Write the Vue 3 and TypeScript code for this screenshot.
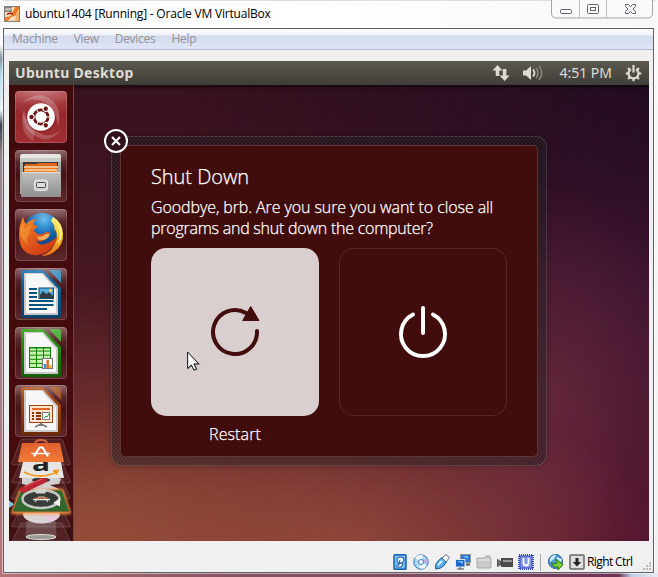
<script setup lang="ts">
const menus: string[] = ['Machine', 'View', 'Devices', 'Help']
const dots: number[] = [60, 180, 300]
const cells: number[] = [24.1, 28.2, 32.3, 36.4]
const gearTeeth: number[] = [45, 90, 135, 180, 225, 270, 315]
const docs = [
  { id: 'writer', main: '#0f6ea8', dark: '#08426a', light: '#3f8fbe' },
  { id: 'calc', main: '#2d9c10', dark: '#146004', light: '#48ab34' },
  { id: 'impress', main: '#b35218', dark: '#6d2b06', light: '#a4552a' },
]
</script>

<template>
  <div class="window">
    <header class="titlebar">
      <svg class="app-icon" width="16" height="16" viewBox="0 0 16 16">
        <rect x=".5" y=".5" width="15" height="15" fill="#f6dcbc" stroke="#8b7b70" />
        <path d="M8 6l3-5h4v2l-4 7-4 1-3 4H1v-4l4-1z" fill="#ef7b24" />
        <path d="M12 8l3-3v10h-4z" fill="#f0b06c" />
        <path d="M1 10l5 0 4-8" fill="none" stroke="#fff0d0" />
        <rect width="8" height="6" fill="#84817d" />
        <path d="M1 4l2-2v3m2-3v3m0-2h3M3 7h5" stroke="#e4e2e0" fill="none" />
        <path d="M3 8.500l3-1.500 3 1" stroke="#ac1e10" stroke-width="1.500" fill="none" />
      </svg>
      <h1>ubuntu1404 [Running] - Oracle VM VirtualBox</h1>
      <div class="controls">
        <svg width="102" height="19" viewBox="0 0 102 19">
          <path d="M.5 0v13q0 5 5 5h91q5 0 5-5V0" fill="#fafafa" stroke="#a5a5a8" />
          <path d="M28.500 0v18M55.500 0v18" stroke="#bdbdc0" />
          <rect x="9.500" y="9.500" width="11" height="4" rx="1" fill="#fff" stroke="#606070" />
          <rect x="36.500" y="4.500" width="11" height="9" rx="1" fill="#fff" stroke="#606070" />
          <rect x="39.500" y="7.500" width="5" height="3" fill="#fff" stroke="#606070" />
          <path d="M74.500 4.500h3l2 2.200 2-2.200h3v2L82 9l2.500 2.500v2h-3l-2-2.200-2 2.200h-3v-2L77 9l-2.500-2.500z" fill="#f4f4f5" stroke="#606070" />
        </svg>
      </div>
    </header>

    <div class="frame">
      <nav class="menubar">
        <span v-for="m in menus" :key="m">{{ m }}</span>
      </nav>

      <main class="guest">
        <div class="panel">
          <span class="panel-title">Ubuntu Desktop</span>
          <div class="indicators">
            <svg class="net" width="18" height="16" viewBox="0 0 18 16">
              <path d="M5.500 0l5 5.500H7.300V11H3.700V5.500H.5zM12.600 16l-5-5.500h3.200V4h3.600v6.500h3.200z" fill="#dfdbd2" />
            </svg>
            <svg class="sound" width="20" height="16" viewBox="0 0 20 16">
              <path d="M0 5.500h3l5-4.500v14l-5-4.500H0z" fill="#dfdbd2" />
              <path d="M10 4.500q3 3.500 0 7" stroke="#dfdbd2" stroke-width="1.800" fill="none" />
              <path d="M13 3q4 5 0 10M16 1q5.500 7 0 14" stroke="#8b887f" stroke-width="1.500" fill="none" />
            </svg>
            <span class="clock">4:51 PM</span>
            <svg width="17" height="17" viewBox="0 0 17 17">
              <g stroke="#dfdbd2" stroke-width="2.200">
                <path v-for="a in gearTeeth" :key="a" d="M8.500.8v3" :transform="`rotate(${a} 8.5 8.5)`" />
                <path d="M8.500 0v7.500" />
                <path d="M5.900 4.200a5 5 0 1 0 5.200 0" fill="none" />
              </g>
            </svg>
          </div>
        </div>

        <div class="desktop">
          <aside class="launcher">
            <div class="tile dash">
              <svg width="52" height="52" viewBox="0 0 52 52">
                <path d="M7 12Q22-1 35 8q13 8 8 28Q41 15 25 9 14 7 7 12z" fill="#fff" opacity=".22" />
                <path d="M47 38Q34 54 20 45 5 36 9 18q4 20 20 26 9 2 18-6z" fill="#fff" opacity=".2" />
                <path d="M18 50Q4 42 8 20q2 12 12 20z" fill="#fff" opacity=".18" />
                <circle cx="26" cy="27" r="14.500" fill="#6a0d12" opacity=".3" />
                <circle cx="26" cy="26" r="13.800" fill="#fff" />
                <circle cx="26" cy="26" r="7" fill="none" stroke="#701513" stroke-width="3" />
                <path d="M26 26L37 26M26 26L20.500 16.500M26 26L20.500 35.500" stroke="#fff" stroke-width="1.100" />
                <g v-for="d in dots" :key="d" :transform="`rotate(${d} 26 26)`">
                  <circle cx="35.500" cy="26" r="3.200" fill="#fff" />
                  <circle cx="35.500" cy="26" r="2.200" fill="#701513" />
                </g>
                <circle cx="26" cy="26" r="5.500" fill="#fff" />
              </svg>
            </div>
            <div class="tile">
              <svg width="52" height="52" viewBox="0 0 52 52">
                <defs>
                  <linearGradient id="cab" x2="0" y2="1"><stop stop-color="#c0c0be" /><stop offset="1" stop-color="#8f8f8d" /></linearGradient>
                </defs>
                <path d="M8 4h36q2 0 2 3v37H5V7q0-3 3-3z" fill="#a9a9a6" />
                <path d="M8 4h36q2 0 2 4H5q0-4 3-4z" fill="#e3e3e0" />
                <path d="M5 8h41v4H5z" fill="#c6c6c3" />
                <rect x="8" y="12" width="35" height="11" fill="#373430" />
                <path d="M10 14h12l1-1h19v9H9z" fill="#d9641f" />
                <path d="M9 16h34v2H9z" fill="#f6c088" />
                <path d="M9 18.500h34v4H9z" fill="#f08b33" />
                <path d="M10 20h32" stroke="#fff2dd" />
                <path d="M7 22h38l1 25H6z" fill="url(#cab)" />
                <path d="M7 22.500h38" stroke="#dededc" />
                <rect x="19.500" y="30" width="13" height="10.500" rx="2" fill="#d2d2d0" stroke="#e8e8e6" />
                <rect x="21.500" y="32.500" width="9" height="5" rx="1" fill="#e0e0de" stroke="#484848" />
              </svg>
            </div>
            <div class="tile">
              <svg width="52" height="52" viewBox="0 0 52 52">
                <defs>
                  <radialGradient id="globe" cx=".55" cy=".2" r=".8"><stop stop-color="#5dbaea" /><stop offset=".45" stop-color="#176ab5" /><stop offset="1" stop-color="#0b2b63" /></radialGradient>
                  <linearGradient id="fox" x1="0" x2=".8" y2="1"><stop stop-color="#f08a24" /><stop offset=".55" stop-color="#e2571b" /><stop offset="1" stop-color="#c93612" /></linearGradient>
                  <linearGradient id="tail" x2="0" y2="1"><stop stop-color="#fff27a" /><stop offset=".5" stop-color="#fbc628" /><stop offset="1" stop-color="#e8681a" /></linearGradient>
                </defs>
                <circle cx="27" cy="23" r="19" fill="url(#globe)" />
                <path d="M38 8q9 5 10 16 1 12-9 19-5 4-13 4 13-5 15-16 2-6-1-11l-1 4q2-8-3-12z" fill="url(#tail)" />
                <path d="M8 8q1 5 3 7 5-5 10-5-3 3-2 6l4 1-5 5q3 0 4 3 6 1 9-2h4q0 5-6 8-4 3-8 0 3 7 12 3 5-2 10-7-3 11-11 16-10 6-20 1Q4 39 4 26q0-10 4-18z" fill="url(#fox)" />
                <path d="M5 22q1-7 5-9-2 4 0 7 4-5 8-4-5 4-3 8-5 5-2 12-7-6-8-14z" fill="#f6a03b" opacity=".55" />
                <path d="M22 27q5 2 9-2h4q-2 6-9 6-3 0-4-4z" fill="#f9b25c" />
                <path d="M43 17q5 9 0 17M41 12q8 8 4 19" stroke="#fff7a5" fill="none" />
              </svg>
            </div>
            <div v-for="doc in docs" :key="doc.id" class="tile" :class="doc.id">
              <svg width="52" height="52" viewBox="0 0 52 52">
                <defs>
                  <linearGradient :id="doc.id" x2="0" y2="1"><stop :stop-color="doc.main" /><stop offset="1" :stop-color="doc.dark" /></linearGradient>
                </defs>
                <path d="M8 2h20l18 18v28q0 2-2 2H8q-2 0-2-2V4q0-2 2-2z" :fill="`url(#${doc.id})`" />
                <path d="M34 2h10q2 0 2 2v11z" :fill="doc.light" />
                <path d="M9 5h19l15 16v26H9z" fill="#c9c9c9" />
                <path d="M11 6h16l14 16v23H11z" fill="#f7f7f7" />
                <g v-if="doc.id === 'writer'">
                  <path d="M14 21h8M14 25h8M14 29h8M14 33h24.500M14 37h24.500M14 41h18" stroke="#0d527d" stroke-width="2" />
                  <rect x="24" y="20" width="14.500" height="10.500" fill="#55aee2" stroke="#104b70" />
                  <path d="M25 30v-3l3-4 3 3 3-2 4 4v2z" fill="#333c3e" />
                  <circle cx="35.500" cy="22.500" r="1.700" fill="#f9ce35" />
                </g>
                <g v-else-if="doc.id === 'calc'">
                  <rect x="14.500" y="20.500" width="21" height="20" fill="#c4f3ac" stroke="#158309" />
                  <path v-for="y in cells" :key="y" :d="`M14 ${y}h22`" stroke="#158309" />
                  <path d="M21.500 20v21M28.500 20v21M14 21h22" stroke="#158309" />
                  <rect x="27.500" y="31.500" width="10" height="10" fill="#fff" stroke="#777" />
                  <path d="M30 41v-4" stroke="#2a91d7" stroke-width="2.500" />
                  <path d="M32.700 41v-8" stroke="#e06a20" stroke-width="2.500" />
                  <path d="M35.500 41v-3" stroke="#eab428" stroke-width="2.500" />
                </g>
                <g v-else>
                  <path d="M26 37v4M26 39l-6 3M26 39l6 3" stroke="#777" stroke-width="1.500" />
                  <rect x="14.500" y="20.500" width="23" height="17" fill="#ffe3cf" stroke="#a34312" />
                  <path d="M17 24h18" stroke="#e16a22" stroke-width="2" />
                  <path d="M17 28h2M17 31h2M17 34h2M21 28h5M21 31h5M21 34h5" stroke="#8e3308" stroke-width="1.800" />
                  <rect x="27.500" y="27.500" width="7" height="7" fill="#fff" stroke="#777" />
                  <path d="M29 33l2-2 1 1 2-3" stroke="#25a335" fill="none" />
                </g>
              </svg>
            </div>
            <svg class="folded" width="64" height="104" viewBox="0 0 64 104">
              <defs>
                <linearGradient id="bag" x2="0" y2="1"><stop stop-color="#e06031" /><stop offset="1" stop-color="#f37a35" /></linearGradient>
                <filter id="glow" x="-20%" y="-20%" width="140%" height="140%"><feGaussianBlur stdDeviation="1.500" /></filter>
              </defs>
              <g fill="#fff" fill-opacity=".08" stroke="#fff" stroke-opacity=".16">
                <path d="M14 2h37q2 0 3 2l7 22q1 2-2 2H5q-3 0-2-2L11 4q1-2 3-2z" />
                <path d="M12 24h41l8 20q1 2-2 2H5q-3 0-2-2z" />
                <path d="M12 42h41l8 18q1 2-2 2H5q-3 0-2-2z" />
                <path d="M12 70h41l8 18q1 2-2 2H5q-3 0-2-2z" />
                <path d="M12 86h41l8 18H3z" />
              </g>
              <path d="M17.500 84h29l1 16h-31z" fill="#c8bdbd" opacity=".25" />
              <ellipse cx="32" cy="100" rx="15" ry="2.500" fill="#9b9b95" stroke="#dedede" />
              <ellipse cx="32.500" cy="77" rx="18.500" ry="9.500" fill="#d9d4d3" />
              <path d="M33 77l17 2q-4 5-11 6z" fill="#e7c9dc" />
              <path d="M13 41l10-3h22l7 4-2 5-9 1 9 4-2 4H16l-2-4 8-3-9-2z" fill="#d1d0ce" />
              <ellipse cx="32" cy="43" rx="9" ry="2.500" fill="#343434" />
              <path d="M11 52h43l8 25H2z" fill="#ff9b4a" filter="url(#glow)" />
              <path d="M12 53h41l8 22H3z" fill="#31682d" stroke="#c16f2c" />
              <ellipse cx="32" cy="62" rx="18.500" ry="9" fill="#393b39" stroke="#c6c9c3" stroke-width="2.500" />
              <path d="M25 52.500h13l-2 4h-9z" fill="#d5d4d1" />
              <path d="M26 65l4-5h5l4 5" stroke="#d8d8d8" stroke-width="1.200" fill="none" />
              <path d="M24 62.500h17" stroke="#ececec" stroke-width="1.500" />
              <path d="M26 61h13" stroke="#eb6224" />
              <path d="M44 66l7-5v8.500z" fill="#f0f0ec" />
              <path d="M14 53L35 43" stroke="#bb2634" stroke-width="6" stroke-linecap="round" />
              <path d="M15 50L33 42" stroke="#e65c65" stroke-width="1" />
              <path d="M14 25h38l3 16H10z" fill="#e7e6e4" />
              <text x="23" y="34" font-size="22" font-weight="700" fill="#242424" textLength="18" lengthAdjust="spacingAndGlyphs">a</text>
              <path d="M15 35q16 8 33 0M44 34l5-.5-2 4" fill="none" stroke="#f7981d" stroke-width="1.800" />
              <path d="M13 6h38l4 19H9z" fill="url(#bag)" />
              <path d="M26 7q0-4 6-4t6 4" fill="none" stroke="#d1613a" stroke-width="2" />
              <path d="M25 19.500l5.500-9h3l5.500 9" fill="none" stroke="#fff" stroke-width="2.200" />
              <path d="M22.500 16.500h18.500" stroke="#fff" stroke-width="1.500" />
              <path d="M0 63.500L5 67.300 0 71z" fill="#7dcae9" />
            </svg>
          </aside>

          <section class="dialog">
            <button class="close" aria-label="Close">
              <svg width="24" height="24" viewBox="0 0 24 24">
                <circle cx="12" cy="12" r="11" fill="#30121d" stroke="#fff" stroke-width="2" />
                <path d="M8 8l8 8M16 8l-8 8" stroke="#fff" stroke-width="2" />
              </svg>
            </button>
            <div class="dialog-body">
              <h2>Shut Down</h2>
              <p><span class="line-a">Goodbye, brb. Are you sure you want to close all</span><br><span class="line-b">programs and shut down the computer?</span></p>
              <div class="actions">
                <div class="action">
                  <div class="choice selected">
                    <svg width="168" height="168" viewBox="0 0 168 168">
                      <path d="M106 83A22 22 0 1 1 95 65" fill="none" stroke="#430c0d" stroke-width="4" stroke-linecap="round" />
                      <path d="M99.700 58.500L108 72.500H91.700z" fill="#430c0d" stroke="#430c0d" stroke-width="1" stroke-linejoin="round" />
                    </svg>
                  </div>
                  <span class="restart-label">Restart</span>
                </div>
                <div class="action">
                  <div class="choice">
                    <svg width="168" height="168" viewBox="0 0 168 168">
                      <path d="M74 66.500a22 22 0 1 0 20 0M84 60v25" fill="none" stroke="#fff" stroke-width="4" stroke-linecap="round" />
                    </svg>
                  </div>
                </div>
              </div>
            </div>
          </section>
          <svg class="pointer" width="14" height="21" viewBox="0 0 14 21">
            <path d="M1 2v17l4-4 3 5 3-1.500-2.500-4.500H14z" fill="#0004" />
            <path d="M.6 1v16.500l3.700-3.600 2.600 5.200 2.500-1.200-2.500-5h4.900z" fill="#fff" stroke="#111" />
          </svg>
        </div>
      </main>

      <footer class="status">
        <svg width="16" height="16" viewBox="0 0 16 16">
          <rect x="2" y=".8" width="12" height="14.500" rx="1" fill="#75bbec" stroke="#1762ae" stroke-width="1.500" />
          <ellipse cx="8.500" cy="6" rx="3.500" ry="3" fill="#e7f5ff" stroke="#205fa9" />
          <path d="M4 13l5-4 2 1-2 3H5M8 6l-2 5" fill="#fff" stroke="#205fa9" />
        </svg>
        <svg width="16" height="16" viewBox="0 0 16 16">
          <circle cx="8" cy="8" r="7.200" fill="#a9d6f5" stroke="#2b73b8" />
          <path d="M8 8L2 4q3-4 8-3zM8 8l6 4q-3 4-8 2z" fill="#eff6fc" />
          <path d="M8 8l6-4 1 5z" fill="#c3a5e1" />
          <circle cx="8" cy="8" r="2.500" fill="#fff" stroke="#3a7dbc" />
        </svg>
        <svg width="16" height="16" viewBox="0 0 16 16">
          <path d="M1.500 15q-1-5 3-8.500L8 3.500 12.500 8l-3 4q-3 3-8 3z" fill="#5baceb" stroke="#1560a5" />
          <path d="M8 4l4-3.500 3.500 3L12 8z" fill="#eef2f5" stroke="#617181" />
          <path d="M4 11l4-4" stroke="#d4efff" stroke-width="2" />
        </svg>
        <svg width="16" height="16" viewBox="0 0 16 16">
          <rect x="5.500" y=".5" width="10" height="8" fill="#2876d1" stroke="#8e969f" />
          <path d="M7 2h6v3z" fill="#6db9f3" />
          <path d="M11 10.500h4" stroke="#555" stroke-width="2" />
          <rect x=".5" y="5.500" width="9.500" height="7.500" fill="#1b67c9" stroke="#e4e6ea" />
          <path d="M2 7h6v3z" fill="#6db9f3" />
          <path d="M2 15h7M5 13v2" stroke="#444" />
        </svg>
        <svg width="16" height="16" viewBox="0 0 16 16">
          <path d="M1 4h7l2-2h4v2h1v10H1z" fill="#c9c9c9" stroke="#aaa" />
          <path d="M2 6h11" stroke="#eee" />
        </svg>
        <svg width="16" height="16" viewBox="0 0 16 16">
          <path d="M0 5l4 2v4l-4 2zM4 4h12v9H4z" fill="#4b4b4b" />
          <path d="M6 6h9v2H6z" fill="#999" /><path d="M2 5v8" stroke="#999" />
        </svg>
        <svg width="16" height="16" viewBox="0 0 16 16">
          <rect x="1" y="1" width="14" height="14" fill="none" stroke="#3649b9" stroke-width="2" stroke-dasharray="1 1" />
          <rect x="2" y="2" width="12" height="12" fill="#7e93ea" stroke="#394eb9" />
          <path d="M5.500 4v4.500q0 3 2.500 3t2.500-3V4" stroke="#fff" stroke-width="1.800" fill="none" />
        </svg>
        <i class="divider"></i>
        <svg width="16" height="16" viewBox="0 0 16 16">
          <circle cx="7.500" cy="7.500" r="7" fill="#4c99da" stroke="#205b91" />
          <path d="M2 4q5-5 6-3L6 5 2 8zM9 3l5 2-1 3-5-1z" fill="#c9eaff" />
          <path d="M3 9q3 2 6 0l-1-4 7 5.500L10 16v-3q-5 1-7-4z" fill="#7bcd33" stroke="#287a13" />
        </svg>
        <svg width="16" height="16" viewBox="0 0 16 16">
          <rect x="1" y="1" width="14" height="14" rx="1" fill="#ddd" stroke="#666" stroke-width="1.500" />
          <path d="M8 4v5" stroke="#222" stroke-width="3" />
          <path d="M3.800 8h8.400L8 12.500z" fill="#222" />
        </svg>
        <span class="host-key">Right Ctrl</span>
        <svg class="grip" width="9" height="9" viewBox="0 0 9 9">
          <path d="M6 0h2v2H6zM3 3h2v2H3zM6 3h2v2H6zM0 6h2v2H0zM3 6h2v2H3zM6 6h2v2H6z" fill="#bdbdbd" />
        </svg>
      </footer>
    </div>
  </div>
</template>

<style>
body { margin: 0; overflow: hidden; }
</style>

<style scoped>
* { box-sizing: border-box; }
.window {
  width: 658px; height: 577px; padding: 0 3px 4px;
  display: flex; flex-direction: column;
  font-family: "Open Sans", "Noto Sans", sans-serif;
  background:
    linear-gradient(90deg, #b57478, #85535f 35%, #7c4a60 70%, #6b3356 94%, #c4cfe4 96%, #e7e9f0) 0 573px / 658px 4px no-repeat,
    linear-gradient(#fafafa 45px, #8899a0 58px, #b4dced 75px, #edf5f6 110px, #384450 125px, #98878e 155px, #a5848f 350px, #b57478) 0 0 / 3px 577px no-repeat,
    linear-gradient(#fafafa, #f0f0f0) 655px 0 / 3px 577px no-repeat,
    #fcfcfc;
}
.titlebar { height: 28px; display: flex; align-items: flex-start; background: linear-gradient(90deg, #fafafa, #fff 50%, #f7f7f7); border-top: 1px solid #ddd; }
.app-icon { margin: 5px 0 0 1px; }
h1 { margin: 5px 0 0 5px; font-size: 12px; line-height: 16px; font-weight: 400; color: #000; white-space: nowrap; letter-spacing: -.2px; }
.controls { margin: -1px 2px 0 auto; }
.controls svg { display: block; }
.frame { width: 651px; height: 545px; border: 1px solid #626065; background: #f0f0f0; box-shadow: 0 0 0 1px #ffffff80; display: flex; flex-direction: column; }
.menubar { height: 21px; flex: none; display: flex; gap: 16px; padding: 1px 0 0 8px; border-bottom: 1px solid #b4bad2; background: linear-gradient(#fff, #eef0f8 6px, #d4dbed 7px, #dfe5f5); color: #929299; font-size: 12px; line-height: 17px; letter-spacing: -.29px; }
.guest { width: 640px; height: 480px; margin: 11px 0 0 5px; flex: none; overflow: hidden; }
.panel { height: 24px; display: flex; align-items: center; justify-content: space-between; padding: 0 7px 0 6px; background: linear-gradient(#5c594f, #3e3d38); color: #dfdbd2; }
.panel-title { font: 700 14px/22px "Noto Sans", sans-serif; letter-spacing: .3px; }
.indicators { display: flex; align-items: center; }
.net { margin-right: 13px; }
.sound { margin-right: 16px; }
.clock { font: 400 14px/22px "Noto Sans", sans-serif; margin-right: 13px; }
.desktop {
  height: 456px; position: relative; display: flex; gap: 37px;
  background:
    linear-gradient(35deg, #ffffff08 10%, transparent 42%),
    linear-gradient(#38121e, #3d141f 20%, #46161f 45%, #5c2226 62%, #743029 77%, #86402f 90%, #8e4630);
}
.desktop::before {
  content: ""; position: absolute; inset: 0;
  background: linear-gradient(#1f0b22, #2a0e27 20%, #3d1430 42%, #47152f 65%, #53142f);
  mask-image: linear-gradient(100deg, transparent 25%, #0005 48%, #000a 75%, #000 95%);
}
.desktop::after {
  content: ""; position: absolute; inset: 0;
  background:
    linear-gradient(#0008, transparent 5px),
    radial-gradient(ellipse 130px 210px at 545px 310px, #86405259, transparent),
    radial-gradient(ellipse 310px 150px at 340px 456px, #a65a4285, transparent);
}
.launcher { width: 65px; height: 456px; flex: none; padding: 6px 0 0 6px; background: linear-gradient(#400b0d, #460b0d 75%, #401012); border-right: 1px solid #744044; position: relative; z-index: 1; display: flex; flex-direction: column; gap: 7px; }
.tile { width: 52px; height: 52px; flex: none; border-radius: 4px; position: relative; background: linear-gradient(#805055, #59282d 22%, #451316 48%, #5e282d); box-shadow: inset 0 0 0 1px #ffffff14; overflow: hidden; }
.tile::after { content: ""; position: absolute; inset: 0; border-radius: 4px; box-shadow: inset 0 0 0 1px #ffffff18; background: radial-gradient(ellipse 40px 15px at 50% 0, #ffffff40, transparent); }
.tile svg { display: block; }
.dash { background: linear-gradient(#b24b50, #98272b 45%, #a02f33); }
.impress { margin-top: -1px; }
.folded { position: absolute; left: 0; top: 352px; }
.dialog { width: 436px; height: 330px; flex: none; margin-top: 51px; padding: 8px; position: relative; z-index: 1; border: 1px solid #ffffff20; border-radius: 11px; background: radial-gradient(circle, #ffffff1c .6px, transparent .8px) 0 0 / 4px 4px, radial-gradient(circle, #ffffff1c .6px, transparent .8px) 2px 2px / 4px 4px, #15171873; box-shadow: 0 0 5px #0004; }
.close { position: absolute; left: -8px; top: -8px; width: 24px; height: 24px; padding: 0; border: 0; background: none; }
.close svg { display: block; }
.dialog-body { width: 418px; height: 312px; padding: 17px 30px 0; border: 1px solid #ffffff2c; border-radius: 5px; background: #410c0c; color: #fff; -webkit-text-stroke: .25px #fff; }
h2 { margin: 0; font-size: 20px; line-height: 27px; font-weight: 300; letter-spacing: -.05px; }
p { margin: 7px 0 9px; font-size: 16px; line-height: 21px; font-weight: 300; white-space: nowrap; }
.line-a { letter-spacing: -.09px; }
.line-b { letter-spacing: -.24px; }
.actions { display: flex; gap: 20px; }
.action { width: 168px; flex: none; text-align: center; }
.choice { width: 168px; height: 168px; border-radius: 15px; box-shadow: inset 0 0 0 1px #ffffff1c; }
.choice svg { display: block; }
.selected { background: #d9cfce; box-shadow: none; }
.restart-label { display: block; margin-top: 7px; font-size: 16px; line-height: 22px; font-weight: 300; letter-spacing: .1px; }
.pointer { position: absolute; z-index: 2; left: 178px; top: 266px; }
.status { flex: 1; display: flex; align-items: center; gap: 5px; padding: 11px 0 0 388px; position: relative; }
.status svg { flex: none; }
.divider { width: 1px; height: 17px; margin: 0 2px 0 1px; background: #aaa; }
.host-key { font-size: 12px; line-height: 16px; margin-left: -3px; color: #000; white-space: nowrap; letter-spacing: -.6px; }
.status .grip { position: absolute; right: 1px; bottom: 1px; }
</style>
